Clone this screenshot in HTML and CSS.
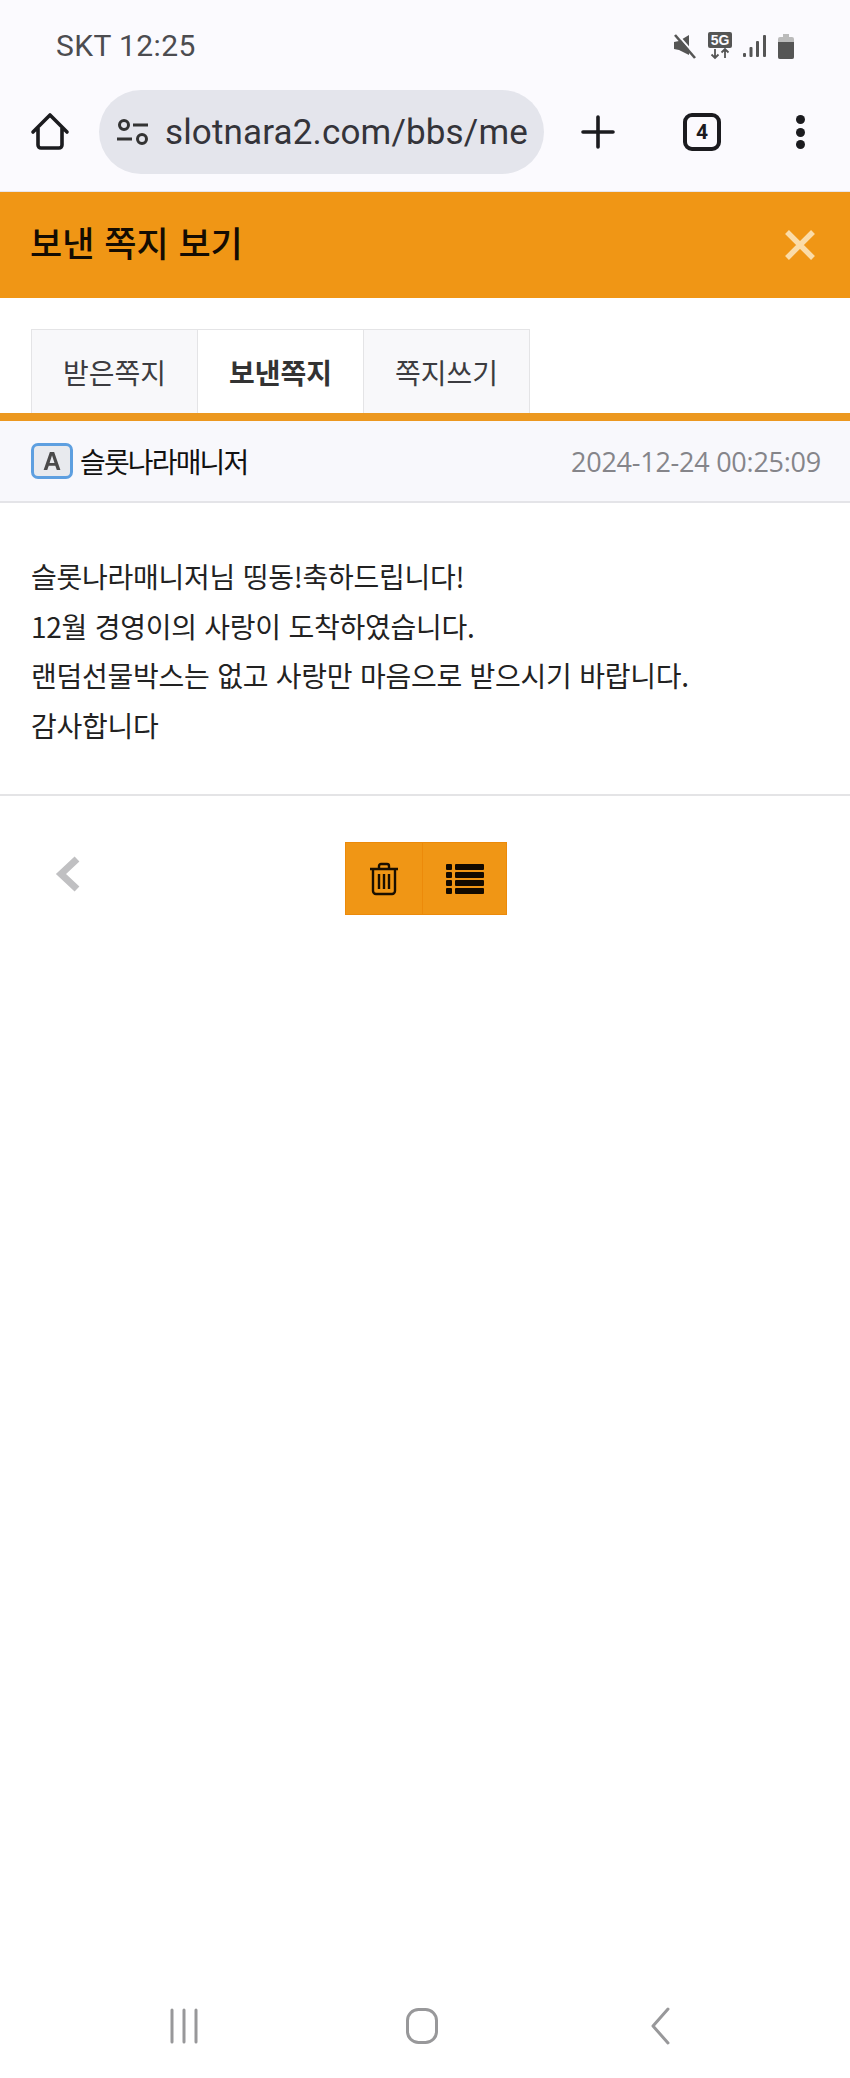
FILE: index.html
```html
<!DOCTYPE html>
<html lang="ko">
<head>
    <meta charset="UTF-8">
    <meta name="viewport" content="width=device-width, initial-scale=1.0">
    <title>보낸 쪽지 보기</title>
    <link rel="stylesheet" href="styles.css">
</head>
<body>

    <div class="phone">
        <div class="browser">
            <div class="status-bar">
                <span class="status-text">SKT 12:25</span>
                <div class="status-icons">
                    <svg width="24" height="26" viewBox="0 0 24 26"><path d="M1 9l5-1 10-6v20L6 17l-5-1z" fill="#555"/><path d="M4 1l20 23" stroke="#fbfafe" stroke-width="2"/><path d="M2 2l20 23" stroke="#555" stroke-width="2.600"/></svg>
                    <svg width="26" height="28" viewBox="0 0 26 28"><rect x="1" y="0" width="24" height="16" rx="2" fill="#555"/><path d="M8 17v9M4.500 22.500L8 26l3.500-3.500M18 26v-9M14.500 20.500L18 17l3.500 3.500" fill="none" stroke="#555" stroke-width="1.800"/><text x="13" y="13" class="five-g">5G</text></svg>
                    <svg width="24" height="24" viewBox="0 0 24 24"><g fill="#555"><rect x="0" y="19" width="3" height="4" rx="1"/><rect x="6.500" y="13" width="3" height="10" rx="1"/><rect x="13" y="7" width="3" height="16" rx="1"/><rect x="20" y="1" width="3" height="22" rx="1"/></g></svg>
                    <svg width="18" height="26" viewBox="0 0 18 26"><path d="M6 1h6v3h3a2 2 0 012 2v18a2 2 0 01-2 2H3a2 2 0 01-2-2V6a2 2 0 012-2h3z" fill="#bbb"/><path d="M1 9h16v15a2 2 0 01-2 2H3a2 2 0 01-2-2z" fill="#555"/></svg>
                </div>
            </div>
            <div class="toolbar">
                <svg class="home-icon" width="40" height="40" viewBox="0 0 40 40"><path d="M3 20L20 3l17 17M8 16v17a3 3 0 003 3h18a3 3 0 003-3V16" fill="none" stroke="#1b1b1f" stroke-width="3.600" stroke-linejoin="round" stroke-linecap="round"/></svg>
                <div class="url-bar">
                    <svg width="34" height="26" viewBox="0 0 34 26"><g fill="none" stroke="#333" stroke-width="3"><circle cx="8" cy="6" r="4.500"/><circle cx="26" cy="20" r="4.500"/><path d="M17 6h15M1 20h15"/></g></svg>
                    <span class="url-text">slotnara2.com/bbs/me</span>
                </div>
                <svg class="plus-icon" width="34" height="34" viewBox="0 0 34 34"><path d="M17 2v30M2 17h30" stroke="#1b1b1f" stroke-width="3.600" stroke-linecap="round"/></svg>
                <div class="tab-count">4</div>
                <div class="menu-dots"><i></i><i></i><i></i></div>
            </div>
        </div>

        <div class="title-bar">
            <h1>보낸 쪽지 보기</h1>
            <svg class="close-icon" width="34" height="34" viewBox="0 0 34 34"><path d="M4 4l26 26M30 4L4 30" stroke="#fbdca8" stroke-width="5.500"/></svg>
        </div>

        <div class="tabs">
            <a class="tab">받은쪽지</a>
            <a class="tab active">보낸쪽지</a>
            <a class="tab">쪽지쓰기</a>
        </div>

        <div class="memo-head">
            <div class="sender">
                <div class="level-icon"><span>A</span></div>
                <span>슬롯나라매니저</span>
            </div>
            <span class="memo-date">2024-12-24 00:25:09</span>
        </div>

        <div class="memo-body">
            <p>슬롯나라매니저님 띵동!축하드립니다!</p>
            <p>12월 경영이의 사랑이 도착하였습니다.</p>
            <p>랜덤선물박스는 없고 사랑만 마음으로 받으시기 바랍니다.</p>
            <p>감사합니다</p>
        </div>

        <div class="memo-actions">
            <svg class="prev-icon" width="26" height="36" viewBox="0 0 26 36"><path d="M22 3L6 18l16 15" fill="none" stroke="#c0c0c2" stroke-width="7"/></svg>
            <div class="btn-group">
                <a class="btn btn-del">
                    <svg width="30" height="34" viewBox="0 0 30 34"><g fill="none" stroke="#1a0f00" stroke-width="2.400" stroke-linejoin="round"><path d="M1 7h28M10 7V4a2 2 0 012-2h6a2 2 0 012 2v3M4 7v22a3 3 0 003 3h16a3 3 0 003-3V7"/><path d="M10 12v15M15 12v15M20 12v15"/></g></svg>
                </a>
                <a class="btn btn-list">
                    <svg width="38" height="30" viewBox="0 0 38 30"><g fill="#120a00"><rect x="0" y="0" width="6" height="6" rx="1"/><rect x="0" y="8" width="6" height="6" rx="1"/><rect x="0" y="16" width="6" height="6" rx="1"/><rect x="0" y="24" width="6" height="6" rx="1"/><rect x="9" y="0" width="29" height="6" rx="1"/><rect x="9" y="8" width="29" height="6" rx="1"/><rect x="9" y="16" width="29" height="6" rx="1"/><rect x="9" y="24" width="29" height="6" rx="1"/></g></svg>
                </a>
            </div>
        </div>

        <div class="spacer"></div>

        <div class="nav-bar">
            <svg width="28" height="36" viewBox="0 0 28 36"><path d="M2 2v32M14 2v32M26 2v32" stroke="#98989a" stroke-width="3" stroke-linecap="round"/></svg>
            <svg width="32" height="36" viewBox="0 0 32 36"><rect x="1.500" y="1.500" width="29" height="33" rx="11" fill="none" stroke="#98989a" stroke-width="3"/></svg>
            <svg class="nav-back" width="19" height="38" viewBox="0 0 19 38"><path d="M17 2L2 19l15 17" fill="none" stroke="#98989a" stroke-width="3" stroke-linecap="round" stroke-linejoin="round"/></svg>
        </div>
    </div>

</body>
</html>
```

FILE: styles.css
```css
* {
    box-sizing: border-box;
}

body {
    margin: 0;
    background-color: #fff;
    font-family: "Noto Sans CJK KR", "Noto Sans", sans-serif;
}

.phone {
    width: 850px;
    height: 2078px;
    display: flex;
    flex-direction: column;
    overflow: hidden;
}

.browser {
    height: 192px;
    background-color: #fbfafe;
    border-bottom: 1px solid #e8e6ea;
}

.status-bar {
    height: 90px;
    padding: 29px 55px 0 56px;
    display: flex;
    justify-content: space-between;
    align-items: flex-start;
}

.status-text {
    font-family: Roboto, sans-serif;
    font-size: 30px;
    line-height: 34px;
    letter-spacing: 0.4px;
    color: #4c4c50;
}

.status-icons {
    display: flex;
    align-items: center;
    gap: 10px;
    padding-top: 3px;
}

.five-g {
    font-family: "Liberation Sans", sans-serif;
    font-size: 14px;
    font-weight: bold;
    fill: #fbfafe;
    text-anchor: middle;
}

.toolbar {
    height: 84px;
    display: flex;
    align-items: center;
}

.home-icon {
    margin-left: 30px;
}

.url-bar {
    width: 445px;
    height: 84px;
    margin-left: 29px;
    padding-left: 17px;
    display: flex;
    align-items: center;
    gap: 15px;
    background-color: #e4e5ec;
    border-radius: 42px;
    overflow: hidden;
}

.url-text {
    font-family: Roboto, sans-serif;
    font-size: 35px;
    letter-spacing: 0.15px;
    white-space: nowrap;
    color: #34343a;
}

.plus-icon {
    margin-left: 37px;
}

.tab-count {
    width: 38px;
    height: 38px;
    margin-left: 68px;
    display: flex;
    align-items: center;
    justify-content: center;
    border: 4px solid #1b1b1f;
    border-radius: 9px;
    font-family: Roboto, sans-serif;
    font-size: 21px;
    font-weight: bold;
    color: #1b1b1f;
}

.menu-dots {
    margin-left: 75px;
    display: flex;
    flex-direction: column;
    gap: 3.5px;
}

.menu-dots i {
    display: block;
    width: 9px;
    height: 9px;
    border-radius: 50%;
    background-color: #1b1b1f;
}

.title-bar {
    height: 106px;
    padding: 0 33px 0 30px;
    display: flex;
    align-items: center;
    justify-content: space-between;
    background-color: #f09615;
}

.title-bar h1 {
    margin: 0 0 8px;
    font-size: 35px;
    font-weight: 500;
    color: #140c02;
}

.tabs {
    height: 123px;
    padding: 31px 0 0 32px;
    display: flex;
    border-bottom: 8px solid #ec981f;
}

.tab {
    width: 167px;
    display: flex;
    align-items: center;
    justify-content: center;
    background-color: #f8f8fa;
    border: 1px solid #e4e4e6;
    border-bottom: none;
    margin-left: -1px;
    font-size: 28px;
    color: #3c3c40;
}

.tab.active {
    background-color: #fff;
    font-weight: 700;
    color: #333;
}

.memo-head {
    height: 82px;
    padding: 0 29px 0 31px;
    display: flex;
    align-items: center;
    justify-content: space-between;
    background-color: #f8f8fc;
    border-bottom: 2px solid #e4e4e8;
}

.sender {
    display: flex;
    align-items: center;
    gap: 7px;
    font-size: 28px;
    letter-spacing: -1.85px;
    color: #111;
}

.level-icon {
    width: 42px;
    height: 36px;
    display: flex;
    align-items: center;
    justify-content: center;
    background-color: #e8eaee;
    border: 3px solid #5d9fe0;
    border-radius: 7px;
    font-family: "Liberation Sans", sans-serif;
    font-size: 25px;
    font-weight: bold;
    letter-spacing: 0;
    color: #4a4a4a;
    filter: blur(0.7px);
}

.memo-date {
    font-family: "Open Sans", sans-serif;
    font-size: 27px;
    letter-spacing: -0.25px;
    color: #85858a;
}

.memo-body {
    height: 293px;
    padding: 49px 31px 0;
    border-bottom: 2px solid #e4e4e6;
}

.memo-body p {
    margin: 0;
    font-size: 28px;
    line-height: 49.5px;
    letter-spacing: -0.25px;
    color: #222;
}

.memo-actions {
    padding: 46px 0 0 55px;
    display: flex;
    align-items: flex-start;
}

.prev-icon {
    margin-top: 14px;
}

.btn-group {
    margin-left: 264px;
    display: flex;
    height: 73px;
}

.btn {
    display: flex;
    align-items: center;
    justify-content: center;
    background-color: #f09615;
    border: 1px solid #ec8a0a;
}

.btn-del {
    width: 78px;
}

.btn-list {
    width: 85px;
    margin-left: -1px;
}

.spacer {
    flex: 1;
}

.nav-bar {
    height: 98px;
    padding: 28px 0 0 170px;
    display: flex;
    align-items: flex-start;
    gap: 208px;
}

.nav-back {
    margin-left: 5px;
    margin-top: -1px;
}
```
